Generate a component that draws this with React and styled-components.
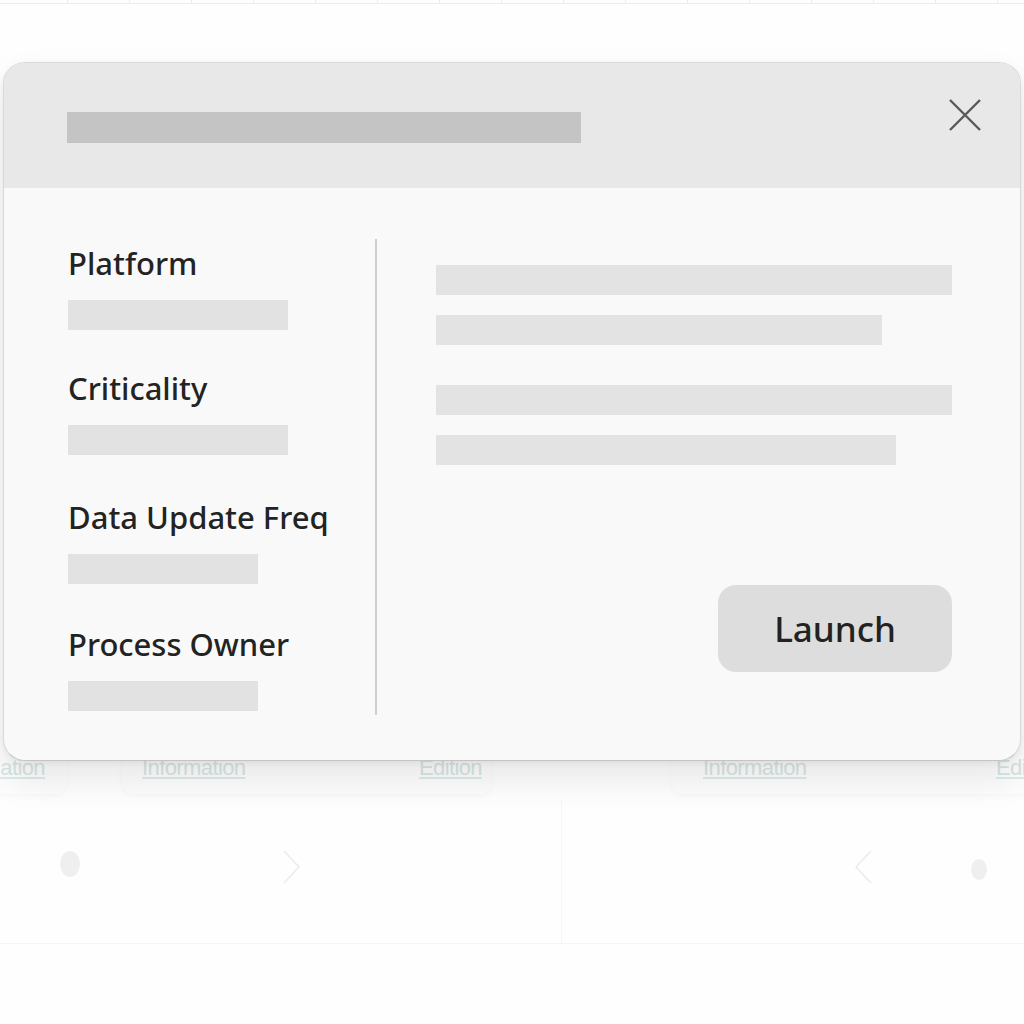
import React from "react";
import styled, { createGlobalStyle } from "styled-components";

const GlobalStyle = createGlobalStyle`
    html, body {
        margin: 0;
        padding: 0;
        background: #fefefe;
        font-family: "Noto Sans", "DejaVu Sans", sans-serif;
    }
`;

const Page = styled.div`
    position: relative;
    width: 1024px;
    height: 1024px;
    overflow: hidden;
    background: #fefefe;
`;

const Ruler = styled.div`
    height: 3px;
    border-bottom: 1px solid #ececec;
    display: flex;
    padding-left: 6px;
    div {
        flex: 0 0 61px;
        border-right: 1px solid #ededed;
    }
`;

const Backdrop = styled.div`
    padding-top: 734px;
    display: flex;
    flex-direction: column;
    gap: 6px;
`;

const CardRow = styled.div`
    display: flex;
    margin-left: -40px;
`;

const Card = styled.div`
    width: ${(p) => p.w}px;
    margin-right: ${(p) => p.gap || 0}px;
    flex: 0 0 auto;
    height: 56px;
    border-radius: 12px;
    background: #fdfdfd;
    box-shadow: 0 2px 6px rgba(0, 0, 0, 0.03);
    display: flex;
    justify-content: space-between;
    align-items: flex-end;
    padding: 0 ${(p) => p.padRight || 10}px 13px 20px;
    box-sizing: border-box;
`;

const FaintLink = styled.span`
    font-family: "Liberation Sans Narrow", "Liberation Sans", sans-serif;
    font-size: 22px;
    letter-spacing: -0.6px;
    color: #d6e6e4;
    text-decoration: underline;
    text-decoration-color: #dcecea;
    white-space: nowrap;
`;

const PanelRow = styled.div`
    display: flex;
    height: 143px;
    border-bottom: 1px solid #f4f4f4;
`;

const Panel = styled.div`
    flex: 0 0 ${(p) => p.w}px;
    border-right: ${(p) => (p.divider ? "1px solid #f6f6f6" : "none")};
    display: flex;
    align-items: center;
    padding-left: ${(p) => p.pad}px;
    padding-bottom: 10px;
    gap: ${(p) => p.gap}px;
    box-sizing: border-box;
`;

const Dot = styled.div`
    width: ${(p) => p.s}px;
    height: ${(p) => p.s * 1.3}px;
    border-radius: 50%;
    background: #efefef;
    margin-top: ${(p) => p.shift || 0}px;
`;

const Overlay = styled.div`
    position: absolute;
    left: 3px;
    top: 62px;
    width: 1018px;
    height: 699px;
    border-radius: 22px;
    background: #f9f9f9;
    border: 1px solid #d9d9d9;
    border-bottom-color: #c4c4c4;
    box-sizing: border-box;
    box-shadow: 0 18px 36px rgba(0, 0, 0, 0.09), 0 2px 6px rgba(0, 0, 0, 0.06);
    overflow: hidden;
    display: flex;
    flex-direction: column;
`;

const Header = styled.div`
    height: 125px;
    flex: 0 0 125px;
    background: #e8e8e8;
    display: flex;
    align-items: center;
    justify-content: space-between;
    padding: 0 37px 0 63px;
    box-sizing: border-box;
`;

const TitleBar = styled.div`
    width: 514px;
    height: 31px;
    margin-top: 3px;
    background: #c4c4c4;
`;

const CloseButton = styled.button`
    border: none;
    background: none;
    padding: 0;
    width: 36px;
    height: 36px;
    margin-top: -21px;
    display: flex;
    align-items: center;
    justify-content: center;
    cursor: pointer;
`;

const Body = styled.div`
    flex: 1;
    min-height: 0;
    display: flex;
    padding: 51px 68px 45px 64px;
`;

const InfoColumn = styled.div`
    width: 308px;
    border-right: 2px solid #cfcfcf;
    display: flex;
    flex-direction: column;
    padding-top: 2px;
`;

const Field = styled.div`
    display: flex;
    flex-direction: column;
    gap: 15px;
    margin-top: ${(p) => p.top}px;
`;

const Label = styled.div`
    font-size: 31px;
    font-weight: 500;
    color: #232323;
    line-height: 44px;
    white-space: nowrap;
`;

const ValueBar = styled.div`
    width: ${(p) => p.w}px;
    height: 30px;
    background: #e2e2e2;
`;

const ContentColumn = styled.div`
    flex: 1;
    display: flex;
    flex-direction: column;
    padding-left: 59px;
    padding-top: 26px;
`;

const TextLine = styled.div`
    width: ${(p) => p.w}px;
    height: 30px;
    background: #e3e3e3;
    margin-bottom: ${(p) => p.gap}px;
`;

const Actions = styled.div`
    margin-top: auto;
    margin-bottom: 43px;
    display: flex;
    justify-content: flex-end;
`;

const LaunchButton = styled.button`
    width: 234px;
    height: 87px;
    border: none;
    border-radius: 18px;
    background: #dddddd;
    font-family: "Noto Sans", "DejaVu Sans", sans-serif;
    font-size: 35px;
    font-weight: 500;
    color: #222;
    cursor: pointer;
`;

const Chevron = ({ dir }) => (
    <svg width="20" height="36" viewBox="0 0 20 36">
        <path
            d={dir === "right" ? "M2 2 L17 18 L2 34" : "M18 2 L3 18 L18 34"}
            fill="none"
            stroke="#ebebeb"
            strokeWidth="1.5"
        />
    </svg>
);

const fields = [
    { label: "Platform", w: 220, top: 0 },
    { label: "Criticality", w: 220, top: 36 },
    { label: "Data Update Freq", w: 190, top: 40 },
    { label: "Process Owner", w: 190, top: 38 },
];

const lines = [
    { w: 516, gap: 20 },
    { w: 446, gap: 40 },
    { w: 516, gap: 20 },
    { w: 460, gap: 0 },
];

export default function App() {
    return (
        <Page>
            <GlobalStyle />
            <Ruler>
                {Array.from({ length: 17 }).map((_, i) => (
                    <div key={i} />
                ))}
            </Ruler>
            <Backdrop>
                <CardRow>
                    <Card w={107} gap={55} padRight={22}>
                        <span />
                        <FaintLink>ation</FaintLink>
                    </Card>
                    <Card w={370} gap={179}>
                        <FaintLink>Information</FaintLink>
                        <FaintLink>Edition</FaintLink>
                    </Card>
                    <Card w={420} padRight={32}>
                        <FaintLink style={{ marginLeft: 12 }}>Information</FaintLink>
                        <FaintLink>Edition</FaintLink>
                    </Card>
                </CardRow>
                <PanelRow>
                    <Panel w={562} pad={60} gap={202} divider>
                        <Dot s={20} shift={-6} />
                        <Chevron dir="right" />
                    </Panel>
                    <Panel w={462} pad={291} gap={98}>
                        <Chevron dir="left" />
                        <Dot s={16} shift={6} />
                    </Panel>
                </PanelRow>
            </Backdrop>

            <Overlay>
                <Header>
                    <TitleBar />
                    <CloseButton aria-label="Close">
                        <svg width="34" height="34" viewBox="0 0 34 34">
                            <path
                                d="M2 2 L32 32 M32 2 L2 32"
                                stroke="#595959"
                                strokeWidth="2.4"
                                fill="none"
                            />
                        </svg>
                    </CloseButton>
                </Header>
                <Body>
                    <InfoColumn>
                        {fields.map((f) => (
                            <Field key={f.label} top={f.top}>
                                <Label>{f.label}</Label>
                                <ValueBar w={f.w} />
                            </Field>
                        ))}
                    </InfoColumn>
                    <ContentColumn>
                        {lines.map((l, i) => (
                            <TextLine key={i} w={l.w} gap={l.gap} />
                        ))}
                        <Actions>
                            <LaunchButton>Launch</LaunchButton>
                        </Actions>
                    </ContentColumn>
                </Body>
            </Overlay>
        </Page>
    );
}
